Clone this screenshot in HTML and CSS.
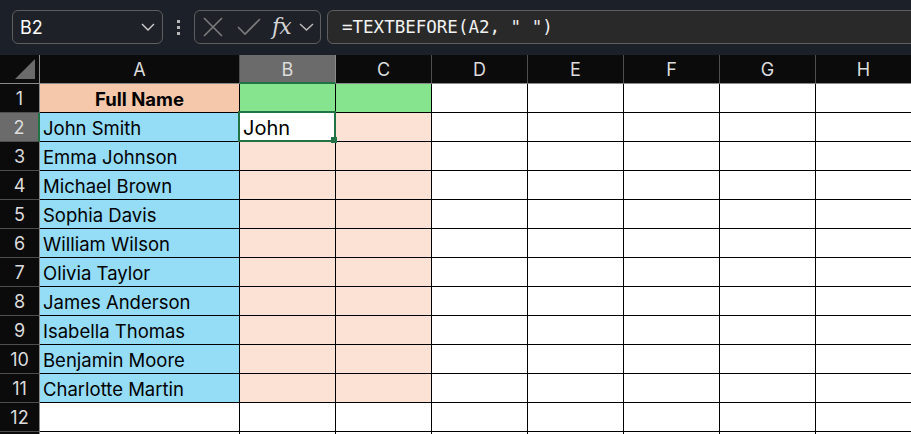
FILE: index.html
```html
<!DOCTYPE html>
<html lang="en">
<head>
  <meta charset="UTF-8">
  <title>Sheet - TEXTBEFORE</title>
  <link rel="stylesheet" href="styles.css">
</head>
<body>
  <div class="topbar">
    <div class="namebox">
      <span class="cell-ref">B2</span>
      <svg class="chev" width="14" height="8" viewBox="0 0 14 8"><path d="M1 1l6 6 6-6" fill="none" stroke="#d0d0d0" stroke-width="1.4"/></svg>
    </div>
    <div class="dots">
      <svg width="6" height="16" viewBox="0 0 6 16"><rect x="1" y="1" width="3" height="3" fill="#b8b8b8"/><rect x="1" y="7" width="3" height="3" fill="#b8b8b8"/><rect x="1" y="13" width="3" height="3" fill="#b8b8b8"/></svg>
    </div>
    <div class="fnbox">
      <svg class="ico-x" width="20" height="20" viewBox="0 0 20 20"><path d="M1 1l18 18M19 1L1 19" stroke="#7c7c7c" stroke-width="1.6" fill="none"/></svg>
      <svg class="ico-ok" width="24" height="18" viewBox="0 0 24 18"><path d="M1 9l7 7L23 1" stroke="#7c7c7c" stroke-width="1.6" fill="none"/></svg>
      <span class="fx">fx</span>
      <svg class="chev" width="15" height="8" viewBox="0 0 15 8"><path d="M1 1l6.5 6 6.5-6" fill="none" stroke="#bdbdbd" stroke-width="1.4"/></svg>
    </div>
    <div class="formula">=TEXTBEFORE(A2, " ")</div>
  </div>

  <div class="sheet">
    <div class="corner"></div>
    <div class="ch">A</div>
    <div class="ch active">B</div>
    <div class="ch">C</div>
    <div class="ch">D</div>
    <div class="ch">E</div>
    <div class="ch">F</div>
    <div class="ch">G</div>
    <div class="ch">H</div>

    <div class="rh">1</div>
    <div class="c head">Full Name</div>
    <div class="c green"></div>
    <div class="c green"></div>
    <div class="c"></div><div class="c"></div><div class="c"></div><div class="c"></div><div class="c"></div>

    <div class="rh active">2</div>
    <div class="c blue">John Smith</div>
    <div class="c sel">John</div>
    <div class="c peach"></div>
    <div class="c"></div><div class="c"></div><div class="c"></div><div class="c"></div><div class="c"></div>

    <div class="rh">3</div>
    <div class="c blue">Emma Johnson</div>
    <div class="c peach"></div>
    <div class="c peach"></div>
    <div class="c"></div><div class="c"></div><div class="c"></div><div class="c"></div><div class="c"></div>

    <div class="rh">4</div>
    <div class="c blue">Michael Brown</div>
    <div class="c peach"></div>
    <div class="c peach"></div>
    <div class="c"></div><div class="c"></div><div class="c"></div><div class="c"></div><div class="c"></div>

    <div class="rh">5</div>
    <div class="c blue">Sophia Davis</div>
    <div class="c peach"></div>
    <div class="c peach"></div>
    <div class="c"></div><div class="c"></div><div class="c"></div><div class="c"></div><div class="c"></div>

    <div class="rh">6</div>
    <div class="c blue">William Wilson</div>
    <div class="c peach"></div>
    <div class="c peach"></div>
    <div class="c"></div><div class="c"></div><div class="c"></div><div class="c"></div><div class="c"></div>

    <div class="rh">7</div>
    <div class="c blue">Olivia Taylor</div>
    <div class="c peach"></div>
    <div class="c peach"></div>
    <div class="c"></div><div class="c"></div><div class="c"></div><div class="c"></div><div class="c"></div>

    <div class="rh">8</div>
    <div class="c blue">James Anderson</div>
    <div class="c peach"></div>
    <div class="c peach"></div>
    <div class="c"></div><div class="c"></div><div class="c"></div><div class="c"></div><div class="c"></div>

    <div class="rh">9</div>
    <div class="c blue">Isabella Thomas</div>
    <div class="c peach"></div>
    <div class="c peach"></div>
    <div class="c"></div><div class="c"></div><div class="c"></div><div class="c"></div><div class="c"></div>

    <div class="rh">10</div>
    <div class="c blue">Benjamin Moore</div>
    <div class="c peach"></div>
    <div class="c peach"></div>
    <div class="c"></div><div class="c"></div><div class="c"></div><div class="c"></div><div class="c"></div>

    <div class="rh">11</div>
    <div class="c blue">Charlotte Martin</div>
    <div class="c peach"></div>
    <div class="c peach"></div>
    <div class="c"></div><div class="c"></div><div class="c"></div><div class="c"></div><div class="c"></div>

    <div class="rh">12</div>
    <div class="c"></div><div class="c"></div><div class="c"></div><div class="c"></div>
    <div class="c"></div><div class="c"></div><div class="c"></div><div class="c"></div>

    <div class="rh"></div>
    <div class="c"></div><div class="c"></div><div class="c"></div><div class="c"></div>
    <div class="c"></div><div class="c"></div><div class="c"></div><div class="c"></div>
  </div>
</body>
</html>
```

FILE: styles.css
```css
:root {
  --bar-bg: #1b2029;
  --box-border: #5e5e5e;
  --hdr-bg: #0b0b0b;
  --hdr-line: #4f4f4f;
  --hdr-text: #dcdcdc;
  --sel-green: #217346;
  --hdr-active: #6b6b6b;
}

* {
  margin: 0;
  padding: 0;
  box-sizing: border-box;
}

html, body {
  width: 911px;
  height: 434px;
  overflow: hidden;
}

body {
  font-family: Inter, "Noto Sans", sans-serif;
  background-color: var(--bar-bg);
}

/* formula bar */
.topbar {
  height: 55px;
  padding: 10px 0 0 12px;
  display: flex;
  align-items: flex-start;
  overflow: hidden;
}

.topbar > * {
  flex: none;
}

.namebox {
  width: 151px;
  height: 34px;
  border: 1px solid var(--box-border);
  border-radius: 6px;
  background-color: #1e2127;
  display: flex;
  align-items: center;
  justify-content: space-between;
  padding: 0 7px 0 7px;
}

.cell-ref {
  color: #ffffff;
  font-size: 18px;
}

.dots {
  width: 31px;
  height: 34px;
  display: flex;
  align-items: center;
  justify-content: center;
}

.fnbox {
  width: 127px;
  height: 34px;
  border: 1px solid var(--box-border);
  border-radius: 6px;
  background-color: #1e2127;
  display: flex;
  align-items: center;
  padding-left: 8px;
}

.ico-x { margin-right: 14px; }
.ico-ok { margin-right: 11px; }

.fx {
  font-family: "DejaVu Serif", "Liberation Serif", serif;
  font-style: italic;
  font-size: 22px;
  color: #d4d4d4;
  letter-spacing: -1px;
  margin-right: 8px;
  line-height: 1;
}

.formula {
  margin-left: 6px;
  width: 620px;
  height: 34px;
  border: 1px solid var(--box-border);
  border-radius: 6px;
  background-color: #292929;
  color: #f2f2f2;
  font-family: "DejaVu Sans Mono", "Liberation Mono", monospace;
  font-size: 17.5px;
  line-height: 32px;
  padding-left: 14px;
  white-space: pre;
}

/* grid */
.sheet {
  display: grid;
  grid-template-columns: 40px 200px repeat(7, 96px);
  grid-auto-rows: 29px;
  background: #ffffff;
}

.corner,
.ch,
.rh {
  background-color: var(--hdr-bg);
  color: var(--hdr-text);
  font-size: 18px;
  display: flex;
  align-items: center;
  justify-content: center;
}

.corner {
  border-right: 1px solid #8a8a8a;
  border-bottom: 1px solid #8a8a8a;
  position: relative;
}

.corner::after {
  content: "";
  position: absolute;
  right: 4px;
  bottom: 4px;
  width: 0;
  height: 0;
  border-left: 20px solid transparent;
  border-bottom: 20px solid #6b6b6b;
}

.ch {
  border-right: 1px solid var(--hdr-line);
  border-bottom: 1px solid #8a8a8a;
  padding-top: 1px;
}

.rh {
  border-right: 1px solid #8a8a8a;
  border-bottom: 1px solid var(--hdr-line);
  padding-top: 1px;
}

.ch.active {
  background-color: var(--hdr-active);
  border-right-color: #8a8a8a;
  border-bottom: 2px solid var(--sel-green);
}

.rh.active {
  background-color: var(--hdr-active);
  border-right: 2px solid var(--sel-green);
}

.c {
  border-right: 1px solid #000;
  border-bottom: 1px solid #000;
  background-color: #ffffff;
  color: #000;
  font-size: 18.5px;
  padding: 1px 0 0 3px;
  display: flex;
  align-items: center;
  white-space: nowrap;
}

.c.head {
  background-color: #f5c8ab;
  font-weight: bold;
  justify-content: center;
  padding-left: 0;
}

.c.green { background-color: #86e38e; }
.c.blue { background-color: #95dcf7; }
.c.peach { background-color: #fbe2d5; }

.c.sel {
  position: relative;
  background-color: #ffffff;
  font-size: 20px;
}

.c.sel::before {
  content: "";
  position: absolute;
  left: -2px;
  top: -2px;
  right: -1px;
  bottom: -1px;
  border: 2px solid var(--sel-green);
}

.c.sel::after {
  content: "";
  position: absolute;
  right: -2px;
  bottom: -2px;
  width: 6px;
  height: 6px;
  background-color: var(--sel-green);
}
```
